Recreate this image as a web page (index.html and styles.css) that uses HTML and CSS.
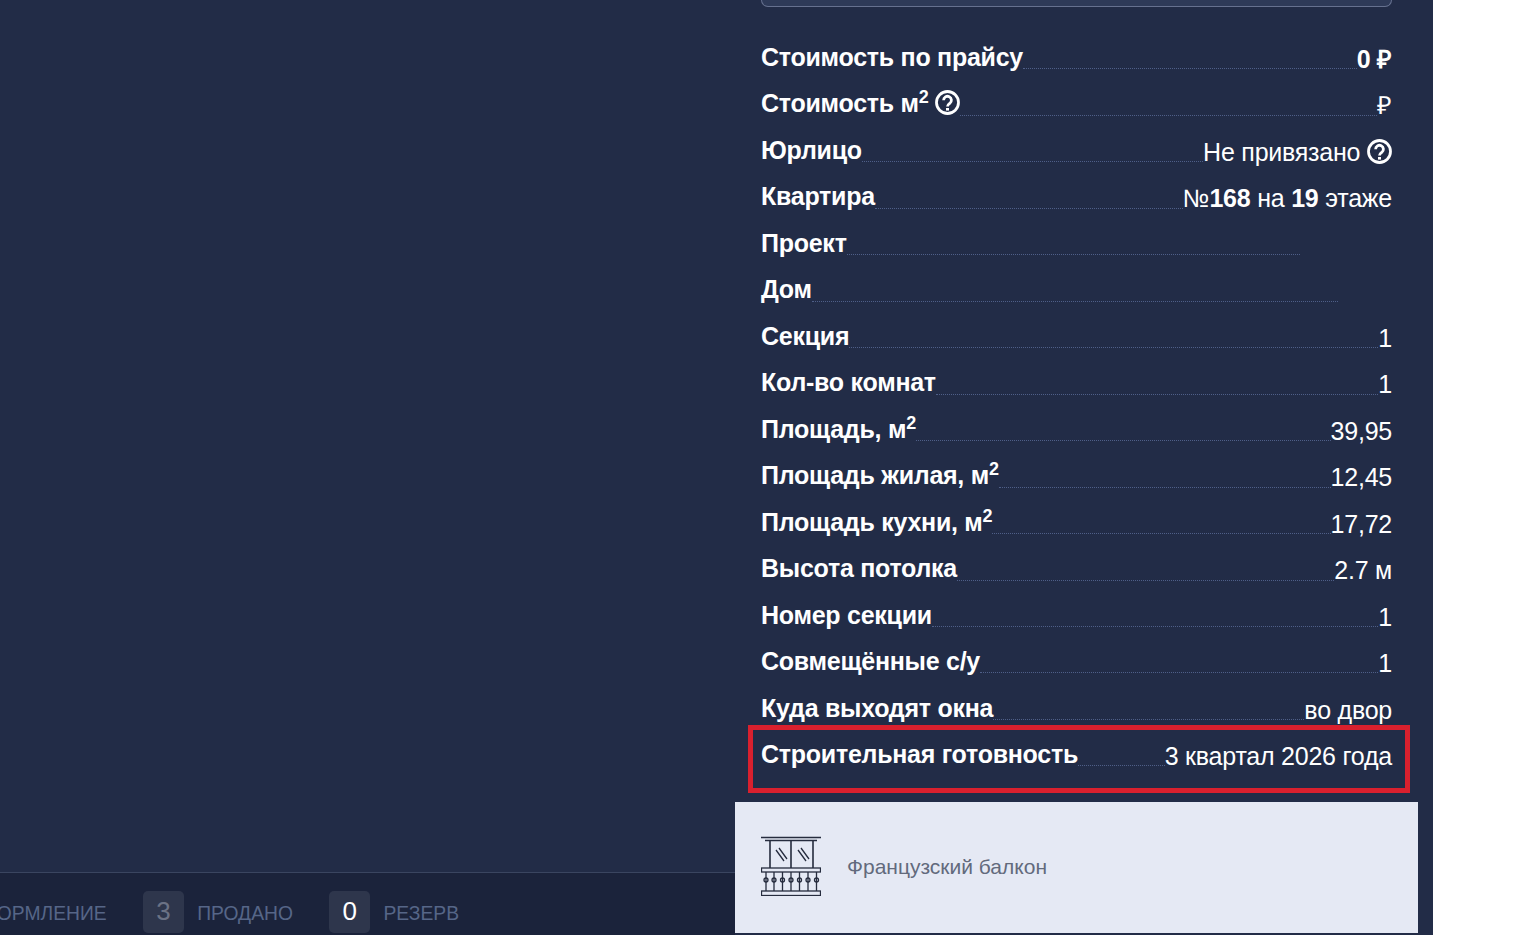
FILE: index.html
```html
<!DOCTYPE html>
<html lang="ru">
<head>
  <meta charset="UTF-8" />
  <meta name="viewport" content="width=device-width, initial-scale=1.0"/>
  <title>Квартира №168</title>
  <link rel="stylesheet" href="styles.css">
</head>
<body>
  <div class="page">
    <div class="left">
      <div class="status-bar">
        <span class="status-label">ОФОРМЛЕНИЕ</span>
        <span class="badge badge-dim">3</span>
        <span class="status-label">ПРОДАНО</span>
        <span class="badge">0</span>
        <span class="status-label">РЕЗЕРВ</span>
      </div>
    </div>

    <div class="panel">
      <div class="panel-top"></div>

      <div class="specs">
        <div class="row">
          <span class="label">Стоимость по прайсу</span><span class="dots"></span>
          <span class="value"><b>0 ₽</b></span>
        </div>
        <div class="row">
          <span class="label">Стоимость м<sup>2</sup>
            <svg class="help" viewBox="0 0 25 25"><circle cx="12.5" cy="12.5" r="11"/><path d="M8.600 10.200a3.900 3.900 0 1 1 6.200 3.100c-1.400 1-2.300 1.600-2.300 3.200"/><path class="help-dot" d="M12.500 18v2.600"/></svg>
          </span><span class="dots"></span>
          <span class="value">₽</span>
        </div>
        <div class="row">
          <span class="label">Юрлицо</span><span class="dots"></span>
          <span class="value">Не привязано
            <svg class="help" viewBox="0 0 25 25"><circle cx="12.5" cy="12.5" r="11"/><path d="M8.600 10.200a3.900 3.900 0 1 1 6.200 3.100c-1.400 1-2.300 1.600-2.300 3.200"/><path class="help-dot" d="M12.500 18v2.600"/></svg>
          </span>
        </div>
        <div class="row">
          <span class="label">Квартира</span><span class="dots"></span>
          <span class="value">№<b>168</b> на <b>19</b> этаже</span>
        </div>
        <div class="row">
          <span class="label">Проект</span><span class="dots"></span>
          <span class="value value-project"></span>
        </div>
        <div class="row">
          <span class="label">Дом</span><span class="dots"></span>
          <span class="value value-house"></span>
        </div>
        <div class="row">
          <span class="label">Секция</span><span class="dots"></span>
          <span class="value">1</span>
        </div>
        <div class="row">
          <span class="label">Кол-во комнат</span><span class="dots"></span>
          <span class="value">1</span>
        </div>
        <div class="row">
          <span class="label">Площадь, м<sup>2</sup></span><span class="dots"></span>
          <span class="value">39,95</span>
        </div>
        <div class="row">
          <span class="label">Площадь жилая, м<sup>2</sup></span><span class="dots"></span>
          <span class="value">12,45</span>
        </div>
        <div class="row">
          <span class="label">Площадь кухни, м<sup>2</sup></span><span class="dots"></span>
          <span class="value">17,72</span>
        </div>
        <div class="row">
          <span class="label">Высота потолка</span><span class="dots"></span>
          <span class="value">2.7 м</span>
        </div>
        <div class="row">
          <span class="label">Номер секции</span><span class="dots"></span>
          <span class="value">1</span>
        </div>
        <div class="row">
          <span class="label">Совмещённые с/у</span><span class="dots"></span>
          <span class="value">1</span>
        </div>
        <div class="row">
          <span class="label">Куда выходят окна</span><span class="dots"></span>
          <span class="value">во двор</span>
        </div>
        <div class="row">
          <span class="label">Строительная готовность</span><span class="dots"></span>
          <span class="value">3 квартал 2026 года</span>
        </div>
      </div>

      <div class="highlight"></div>

      <div class="feature">
        <svg class="feature-icon" viewBox="0 0 60 60">
          <path d="M0 1.500h60M4 4.500h52"/>
          <path class="thick" d="M9 4.500v27.500M30 4.500v27.500M52 4.500v27.500"/>
          <path d="M15 14l8 11M18 12l8 11M37 14l8 11M40 12l8 11"/>
          <rect x="0.5" y="32" width="59" height="4"/>
          <rect x="0.5" y="55" width="59" height="4.500"/>
          <path d="M5 36v19M13 36v19M21.500 36v19M30 36v19M38.500 36v19M47 36v19M55.500 36v19"/>
          <circle cx="5" cy="44" r="2"/><circle cx="13" cy="44" r="2"/><circle cx="21.500" cy="44" r="2"/><circle cx="30" cy="44" r="2"/><circle cx="38.500" cy="44" r="2"/><circle cx="47" cy="44" r="2"/><circle cx="55.500" cy="44" r="2"/>
        </svg>
        <span class="feature-name">Французский балкон</span>
      </div>
    </div>
  </div>
</body>
</html>
```

FILE: styles.css
```css
html, body {
  margin: 0;
  padding: 0;
  height: 935px;
  overflow: hidden;
  background-color: #fff;
}

body {
  font-family: 'Liberation Sans', Arial, sans-serif;
  color: #fff;
}

.page {
  display: flex;
  width: 1433px;
  height: 935px;
  background-color: #222c47;
}

.left {
  width: 735px;
  flex-shrink: 0;
  display: flex;
  flex-direction: column;
  justify-content: flex-end;
  overflow: hidden;
}

.status-bar {
  height: 60px;
  display: flex;
  align-items: flex-end;
  justify-content: flex-end;
  padding: 0 276px 2px 0;
  background-color: #1b233b;
  border-top: 1px solid #3a4560;
  white-space: nowrap;
}

.status-label {
  font-size: 19.3px;
  line-height: 42px;
  color: #566688;
  position: relative;
  top: 2px;
}

.badge {
  flex-shrink: 0;
  width: 41.5px;
  height: 42px;
  margin: 0 13px 0 36px;
  border-radius: 5px;
  background-color: #2e364c;
  font-size: 26px;
  line-height: 40px;
  text-align: center;
  color: #fff;
}

.badge-dim {
  color: #6b7285;
}

.panel {
  position: relative;
  flex: 1;
}

.panel-top {
  height: 6px;
  margin: 0 41px 0 26px;
  background-color: #2e3a58;
  border: 1px solid #66718f;
  border-top: none;
  border-radius: 0 0 8px 8px;
}

.specs {
  margin: 28px 41px 0 26px;
}

.row {
  display: flex;
  height: 46.47px;
  font-size: 25px;
  line-height: 46px;
}

.label {
  font-weight: bold;
  white-space: nowrap;
  letter-spacing: -0.26px;
  line-height: 45.6px;
}

.label sup, .value sup {
  font-size: 18px;
  line-height: 0;
}

.dots {
  flex: 1;
  height: 0;
  margin-top: 33.4px;
  border-bottom: 1px dotted #4f5f88;
}

.value {
  white-space: nowrap;
  position: relative;
  top: 1px;
  letter-spacing: -0.23px;
}

.value-project {
  width: 92px;
}

.value-house {
  width: 54px;
}

.help {
  width: 25px;
  height: 25px;
  vertical-align: -3px;
  fill: none;
  stroke: #fff;
  stroke-width: 2.8;
}

.help-dot {
  stroke-width: 3;
}

.highlight {
  position: absolute;
  left: 13px;
  top: 725px;
  width: 652px;
  height: 58px;
  border: 5px solid #d9202e;
}

.feature {
  position: absolute;
  left: 0;
  top: 802px;
  width: 683px;
  height: 131px;
  display: flex;
  align-items: center;
  gap: 26px;
  padding-left: 26px;
  box-sizing: border-box;
  background-color: #e5e9f4;
}

.feature-icon {
  width: 60px;
  height: 60px;
  margin-top: -3px;
  fill: none;
  stroke: #262c3e;
  stroke-width: 1.3;
}

.feature-icon .thick {
  stroke-width: 1.6;
}

.feature-name {
  font-size: 21px;
  margin-bottom: 2px;
  color: #626a7c;
}
```
